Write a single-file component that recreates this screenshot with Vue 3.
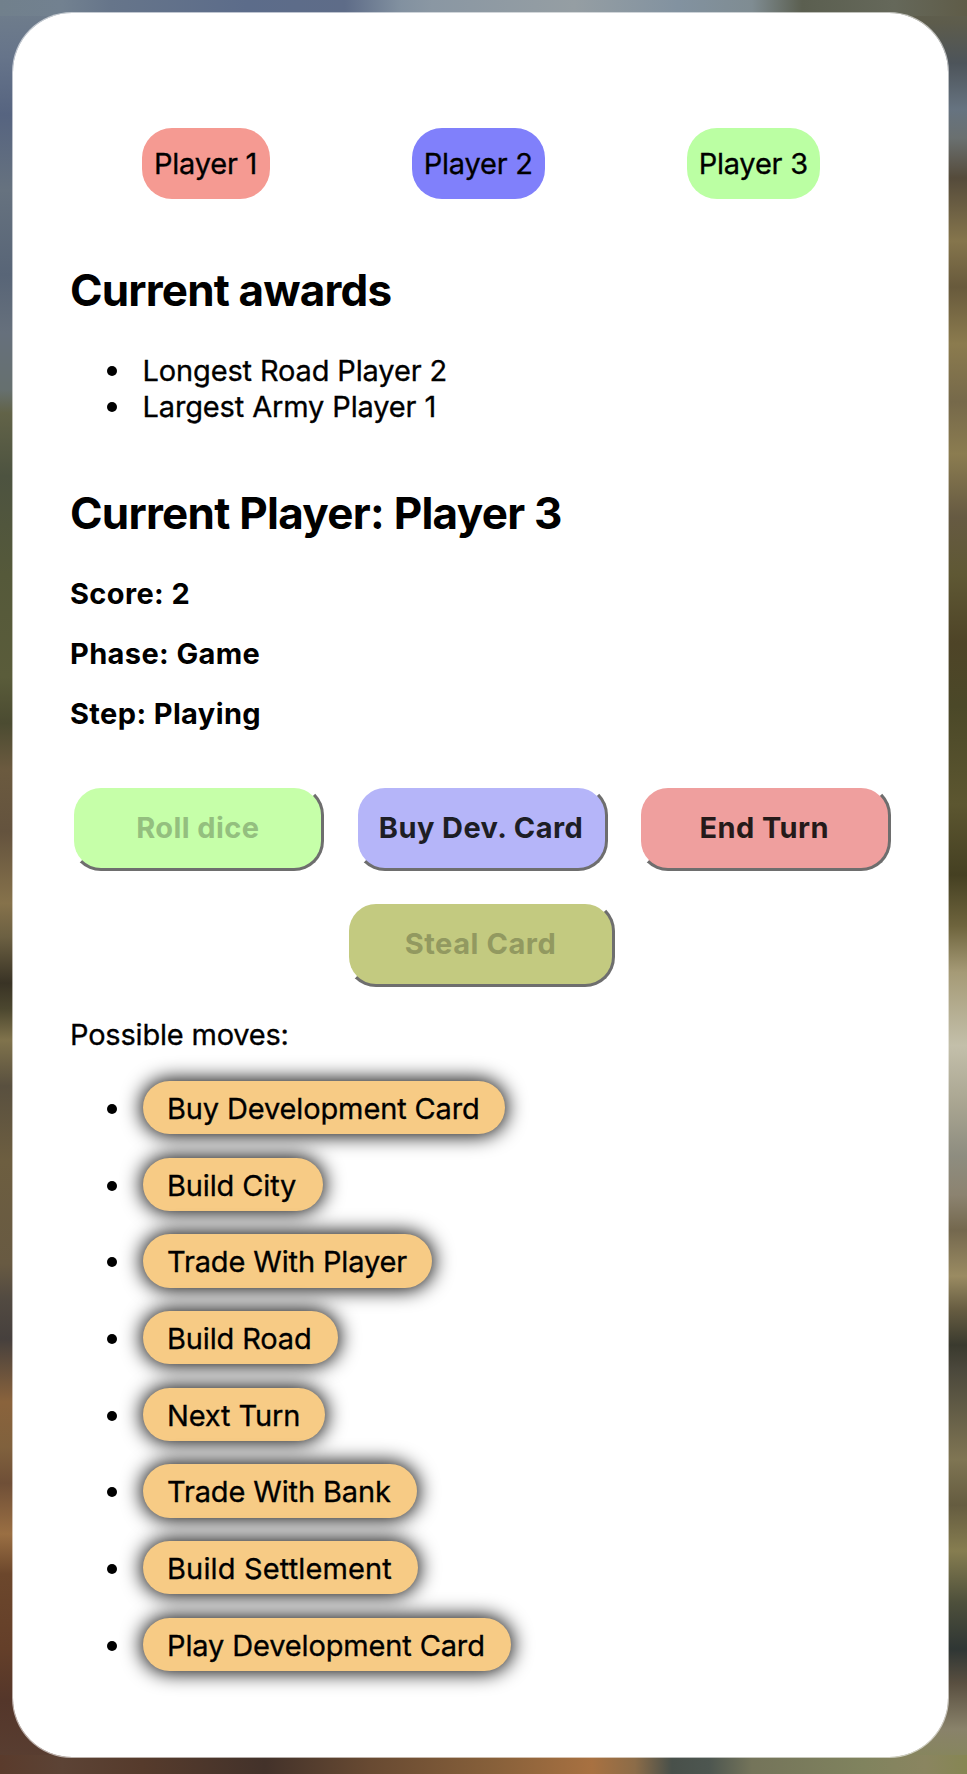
<script setup>
const players = [
  { name: 'Player 1', tone: 'red' },
  { name: 'Player 2', tone: 'blue' },
  { name: 'Player 3', tone: 'green' }
]
const awards = ['Longest Road Player 2', 'Largest Army Player 1']
const stats = ['Score: 2', 'Phase: Game', 'Step: Playing']
const moves = [
  { text: 'Buy Development Card', width: 362.3 },
  { text: 'Build City', width: 180 },
  { text: 'Trade With Player', width: 289.7 },
  { text: 'Build Road', width: 195.7 },
  { text: 'Next Turn', width: 182.3 },
  { text: 'Trade With Bank', width: 274.3 },
  { text: 'Build Settlement', width: 275.3, wide: true },
  { text: 'Play Development Card', width: 368.3 }
]
</script>

<template>
  <div class="page">
    <main class="card">
      <section class="players">
        <div v-for="p in players" :key="p.name" class="chip" :class="p.tone">{{ p.name }}</div>
      </section>
      <h2 class="awards-title">Current awards</h2>
      <ul class="awards">
        <li v-for="a in awards" :key="a">{{ a }}</li>
      </ul>
      <h2 class="current">Current Player: Player 3</h2>
      <div class="stats">
        <h4 v-for="s in stats" :key="s">{{ s }}</h4>
      </div>
      <div class="actions">
        <button class="roll" disabled>Roll dice</button>
        <button class="buy">Buy Dev. Card</button>
        <button class="end">End Turn</button>
        <button class="steal" disabled>Steal Card</button>
      </div>
      <p class="label">Possible moves:</p>
      <ul class="moves">
        <li v-for="m in moves" :key="m.text">
          <span class="pill" :class="{ wide: m.wide }" :style="{ width: m.width + 'px' }">{{ m.text }}</span>
        </li>
      </ul>
    </main>
  </div>
</template>

<style>
body { margin: 0; }
</style>

<style scoped>
.page {
  box-sizing: border-box;
  width: 967px;
  height: 1774px;
  padding: 12px 18px 16px 12px;
  overflow: hidden;
  color: #000;
  font-family: Inter, "Liberation Sans", sans-serif;
  font-size: 29px;
  font-weight: 400;
  letter-spacing: -0.14px;
  line-height: 36px;
  background:
    linear-gradient(90deg, #71808c 0, #728190 62px, #66758a 111px, #5c6c8a 247px, #5e6c88 345px, #8291a0 401px, #8a97a3 432px, #959ea3 574px, #8292a0 678px, #7f8c92 752px, #5b5f50 802px, #65685a 894px, #5f5c48 967px) 0 0 / 100% 16px no-repeat,
    linear-gradient(90deg, #5a3b2c 0, #5c4335 62px, #563b2c 142px, #43322a 265px, #684a32 370px, #87603a 493px, #a87141 592px, #8c6c48 635px, #48504a 672px, #4d5650 709px, #74745a 752px, #80835e 863px, #8a8560 925px, #868653 967px) 0 100% / 100% 19px no-repeat,
    linear-gradient(#717f8c 0, #66748a 57px, #566480 115px, #66727f 190px, #586577 275px, #66707c 333px, #66706f 390px, #626348 413px, #4d5340 476px, #55593a 574px, #5a5c3a 677px, #4b4b31 723px, #6b5a3f 769px, #64533e 832px, #86724b 903px, #6c6042 937px, #393325 983px, #4c472f 1009px, #80734c 1040px, #59503f 1086px, #6d5e40 1161px, #685a42 1264px, #524a41 1299px, #46403d 1339px, #8a633c 1402px, #80613d 1448px, #6f4f37 1483px, #9a6f43 1534px, #6c472c 1574px, #643f29 1649px, #54362a 1701px, #5a4033 1774px) 0 0 / 60px 100% no-repeat,
    linear-gradient(#62614e 0, #5d5c4c 23px, #4d545a 63px, #667380 109px, #6a7070 138px, #554b3b 178px, #85754c 241px, #685a3c 287px, #8b7b4e 344px, #76694a 402px, #8b7c50 454px, #665a42 517px, #5f5834 574px, #4e4427 643px, #4b4828 706px, #5c5630 804px, #454022 875px, #6e643d 926px, #a59a76 972px, #c3bfaa 1046px, #a9a591 1104px, #8e8d80 1155px, #8c8370 1195px, #74684e 1230px, #9a8b62 1276px, #665c41 1310px, #3a3a2e 1345px, #4a473b 1368px, #7f7553 1459px, #655c40 1505px, #867d50 1551px, #4d4f3b 1603px, #2f3634 1649px, #594f40 1683px, #89826a 1729px, #858856 1774px) 100% 0 / 60px 100% no-repeat,
    #776;
}
.card {
  box-sizing: border-box;
  height: 1746px;
  padding: 115px 57px 0;
  border: 1px solid rgba(255, 255, 255, 0.6);
  border-radius: 60px;
  background: #fff;
  background-clip: padding-box;
}
ul { list-style: none; margin: 0; padding: 0 0 0 36.5px; }
li { display: flex; align-items: center; }
li::before {
  content: "";
  flex: none;
  width: 10px;
  height: 10px;
  margin-right: 26px;
  border-radius: 50%;
  background: #000;
}
h2, h4, p { margin: 0; }
.players, .awards, .label, .moves { -webkit-text-stroke: 0.3px #000; }
.players {
  display: grid;
  grid-template-columns: 128px 132.7px 132.8px;
  column-gap: 142.3px;
  padding-left: 71.6px;
}
.chip {
  height: 71px;
  border-radius: 30px;
  line-height: 71px;
  text-align: center;
  white-space: nowrap;
  letter-spacing: -0.22px;
}
.red { background: #f59a92; }
.blue { background: #8080fb; }
.green { background: #bbffa3; }
h2 { font-size: 44px; line-height: 52px; letter-spacing: -0.82px; }
.awards-title { margin-top: 65px; }
.awards { margin-top: 37px; }
.current { margin-top: 62px; letter-spacing: -0.73px; }
.stats { display: grid; row-gap: 24px; margin-top: 37px; }
h4 { font-size: 29px; font-weight: 700; letter-spacing: 0.38px; }
.actions {
  display: flex;
  flex-wrap: wrap;
  justify-content: center;
  gap: 30px 30.2px;
  margin-top: 53px;
  padding-left: 1px;
}
button {
  box-sizing: border-box;
  width: 253px;
  height: 86px;
  padding: 0;
  border: 3px solid #fff;
  border-right-color: #6e6e6e;
  border-bottom-color: #6e6e6e;
  border-radius: 30px;
  font: 700 29px/36px Inter, "Liberation Sans", sans-serif;
  letter-spacing: 0.42px;
}
.roll { background: #c6ffa9; color: #94bf7f; }
.buy { background: #b5b5f9; color: #1d1e25; }
.end { background: #ef9f9e; color: #251a1a; }
.steal { width: 269px; margin-right: 1px; background: #c3ca80; color: #929960; letter-spacing: 0.55px; }
.label { margin-top: 30px; letter-spacing: -0.2px; }
.moves { display: grid; row-gap: 23.4px; margin-top: 28px; }
.moves li::before { margin-top: 3px; }
.pill {
  box-sizing: border-box;
  height: 53.27px;
  padding-left: 24.5px;
  border-radius: 27px;
  background: #f7cb85;
  box-shadow: 0 0 20px 1.5px #000;
  line-height: 55px;
  white-space: nowrap;
}
.wide { letter-spacing: 0.14px; }
</style>
